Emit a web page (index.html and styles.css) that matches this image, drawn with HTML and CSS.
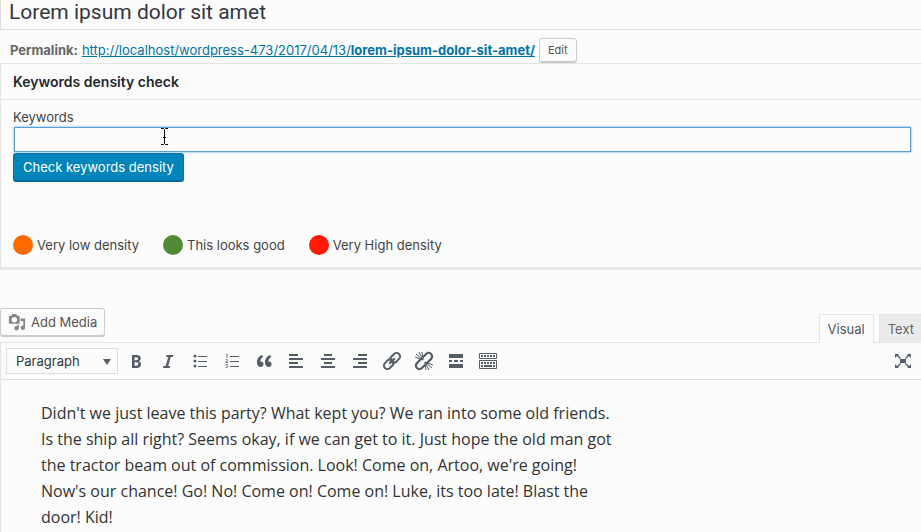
FILE: index.html
```html
<!DOCTYPE html>
<html lang="en">
<head>
    <meta charset="UTF-8">
    <meta name="viewport" content="width=device-width, initial-scale=1.0">
    <title>Edit Post</title>
    <link rel="stylesheet" href="styles.css">
</head>
<body>

    <input type="text" class="post-title" aria-label="Post title" value="Lorem ipsum dolor sit amet">

    <div class="permalink">
        <strong>Permalink:</strong>
        <a href="#">http://localhost/wordpress-473/2017/04/13/<b>lorem-ipsum-dolor-sit-amet/</b></a>
        <button type="button" class="button button-small">Edit</button>
    </div>

    <section class="postbox">
        <h2>Keywords density check</h2>
        <div class="inside">
            <label for="keywords">Keywords</label>
            <div class="field">
                <input type="text" id="keywords" class="keywords-input">
                <svg class="text-cursor" width="9" height="17" viewBox="0 0 9 17" fill="none" stroke="#000">
                    <path d="M1 .5h2.500l1 1 1-1H8M1 16.500h2.500l1-1 1 1H8M4.500 1.500v14M3 9.500h3"/>
                </svg>
            </div>
            <button type="button" class="button-primary">Check keywords density</button>
            <ul class="legend">
                <li><span class="dot low"></span>Very low density</li>
                <li><span class="dot good"></span>This looks good</li>
                <li><span class="dot high"></span>Very High density</li>
            </ul>
        </div>
    </section>

    <div class="editor-tools">
        <button type="button" class="button add-media">
            <svg width="18" height="18" viewBox="0 0 20 20" fill="#82878c">
                <path fill-rule="evenodd" d="M13 11V4c0-.55-.45-1-1-1h-1.670L9 1H5L3.670 3H2c-.55 0-1 .45-1 1v7c0 .55.45 1 1 1h10c.55 0 1-.45 1-1zM7 4.500a3 3 0 1 1 0 6 3 3 0 0 1 0-6z"/>
                <path d="M14 6h5v10.500a2.500 2.500 0 1 1-2.500-2.500c.170 0 .340.020.500.050V9h-3zM10 13h2v4a2.500 2.500 0 1 1-2.500-2.500c.170 0 .340.020.500.050z"/>
            </svg>
            Add Media
        </button>
        <div class="tabs">
            <button type="button" class="tab active">Visual</button>
            <button type="button" class="tab">Text</button>
        </div>
    </div>

    <div class="editor">
        <div class="toolbar">
            <div class="format">
                <select aria-label="Format">
                    <option>Paragraph</option>
                </select>
            </div>
            <button type="button" class="tool" aria-label="Bold">
                <svg viewBox="0 0 20 20"><path fill-rule="evenodd" d="M6 4v13h4.540c1.370 0 2.460-.33 3.260-1 .8-.66 1.200-1.580 1.200-2.770 0-.84-.17-1.510-.51-2.010s-.9-.85-1.670-1.030v-.09c.57-.1 1.020-.4 1.360-.9s.51-1.130.51-1.910c0-1.140-.39-1.980-1.170-2.500C12.750 4.260 11.500 4 9.780 4H6zm2.570 5.150V6.260h1.360c.73 0 1.270.11 1.610.32.340.220.510.580.510 1.070 0 .54-.16.92-.47 1.150s-.82.35-1.510.35h-1.500zm0 2.190h1.600c1.440 0 2.160.53 2.160 1.610 0 .6-.17 1.050-.51 1.340s-.86.43-1.570.43H8.570v-3.380z"/></svg>
            </button>
            <button type="button" class="tool" aria-label="Italic">
                <svg viewBox="0 0 20 20"><path d="M15.500 4l-.6 2h-2.150l-2.600 9h2.150l-.6 2H4.900l.6-2h2.150l2.600-9H8.100l.6-2z"/></svg>
            </button>
            <button type="button" class="tool" aria-label="Bulleted list">
                <svg viewBox="0 0 20 20"><circle cx="5" cy="5" r="1.500"/><circle cx="5" cy="10" r="1.500"/><circle cx="5" cy="15" r="1.500"/><path d="M8 5h9v1H8zM8 10h9v1H8zM8 15h9v1H8z"/></svg>
            </button>
            <button type="button" class="tool" aria-label="Numbered list">
                <svg viewBox="0 0 20 20"><path d="M8 5h9v1H8zM8 10h9v1H8zM8 15h9v1H8z"/><path fill="none" stroke="#555d66" stroke-width=".8" d="M4 3.800l1-.6V7M3.700 8.800q1.300-.8 1.800 0T3.700 11.500h2.300M3.700 13.500h2l-1.200 1.300q1.500 0 1.300 1.200t-2.200.6"/></svg>
            </button>
            <button type="button" class="tool" aria-label="Blockquote">
                <svg viewBox="0 0 20 20"><path d="M9.490 13.220c0-.74-.2-1.380-.61-1.900-.62-.78-1.830-.88-2.530-.72-.29-1.650 1.110-3.750 2.920-4.650L7.880 4c-2.730 1.300-5.420 4.280-4.960 8.050C3.210 14.430 4.590 16 6.540 16c.85 0 1.560-.25 2.120-.75s.83-1.180.83-2.030zm8.050 0c0-.74-.2-1.380-.61-1.900-.63-.78-1.830-.88-2.530-.72-.29-1.650 1.110-3.750 2.920-4.650L15.930 4c-2.730 1.300-5.410 4.280-4.950 8.050.29 2.380 1.660 3.950 3.610 3.950.85 0 1.560-.25 2.120-.75s.83-1.180.83-2.030z"/></svg>
            </button>
            <button type="button" class="tool" aria-label="Align left">
                <svg viewBox="0 0 20 20"><path d="M3 3h9v2H3zM3 7h14v2H3zM3 11h9v2H3zM3 15h14v2H3z"/></svg>
            </button>
            <button type="button" class="tool" aria-label="Align center">
                <svg viewBox="0 0 20 20"><path d="M6 3h8v2H6zM3 7h14v2H3zM6 11h8v2H6zM3 15h14v2H3z"/></svg>
            </button>
            <button type="button" class="tool" aria-label="Align right">
                <svg viewBox="0 0 20 20"><path d="M8 3h9v2H8zM3 7h14v2H3zM8 11h9v2H8zM3 15h14v2H3z"/></svg>
            </button>
            <button type="button" class="tool" aria-label="Insert link">
                <svg viewBox="0 0 20 20"><g fill="none" stroke="#555d66" stroke-width="2" transform="rotate(-45 10 10)"><rect x="0" y="6.500" width="11" height="7" rx="3.500"/><rect x="9" y="6.500" width="11" height="7" rx="3.500"/><path d="M6 10h8"/></g></svg>
            </button>
            <button type="button" class="tool" aria-label="Remove link">
                <svg viewBox="0 0 20 20"><g fill="none" stroke="#555d66" stroke-width="2.200" transform="rotate(-45 10 10)"><path d="M8.500 13.500h-5a3.500 3.500 0 0 1 0-7h5q1.500 0 2 1.500M11.500 6.500h5a3.500 3.500 0 0 1 0 7h-5q-1.500 0-2-1.500"/></g><path fill="none" stroke="#555d66" d="M9 9L1 6M9 9L2 3M9 9L5 1M9 9L8 1M11 11l8 3M11 11l7 6M11 11l4 8M11 11l1 8"/></svg>
            </button>
            <button type="button" class="tool" aria-label="Read more">
                <svg viewBox="0 0 20 20"><path d="M3 3h14v4H3zM3 9h3v2H3zM8 9h4v2H8zM14 9h3v2h-3zM3 13h14v4H3z"/></svg>
            </button>
            <button type="button" class="tool" aria-label="Toolbar toggle">
                <svg viewBox="0 0 20 20"><path fill="none" stroke="#555d66" d="M1.500 2.500h17v5h-17zM1.500 9.500h17v8h-17z"/><path d="M3 4h2v2H3zM6 4h2v2H6zM9 4h2v2H9zM12 4h2v2h-2zM15 4h2v2h-2zM3 11h2v2H3zM6 11h2v2H6zM9 11h2v2H9zM12 11h2v2h-2zM15 11h2v2h-2zM3 14h2v2H3zM6 14h8v2H6zM15 14h2v2h-2z"/></svg>
            </button>
            <button type="button" class="tool fullscreen" aria-label="Fullscreen">
                <svg viewBox="0 0 20 20"><path d="M7 8h6v4H7zM2 3h4L5 4l3 3-1 1-3-3-2 2zM18 3v4l-2-2-3 3-1-1 3-3-1-1zM2 17v-4l2 2 3-3 1 1-3 3 1 1zM18 17h-4l1-1-3-3 1-1 3 3 2-2z"/></svg>
            </button>
        </div>
        <div class="content" contenteditable="true">
            <p>Didn't we just leave this party? What kept you? We ran into some old friends. Is the ship all right? Seems okay, if we can get to it. Just hope the old man got the tractor beam out of commission. Look! Come on, Artoo, we're going! Now's our chance! Go! No! Come on! Come on! Luke, its too late! Blast the door! Kid!</p>
        </div>
    </div>

</body>
</html>
```
FILE: styles.css
```css
* {
    box-sizing: border-box;
}

body {
    margin: 0;
    background-color: #fcfcfc;
    color: #444;
    font-family: Inter, "Liberation Sans", sans-serif;
    font-size: 13px;
    line-height: 20px;
    overflow: hidden;
}

button, input, select {
    font-family: inherit;
    font-size: inherit;
}

button {
    cursor: pointer;
}

.post-title {
    display: block;
    width: 100%;
    height: 30px;
    padding: 0 8px 6px;
    border: 1px solid #ddd;
    border-width: 0 0 1px 1px;
    background-color: transparent;
    color: #32373c;
    font-family: Roboto, sans-serif;
    font-size: 21px;
    outline: none;
}

.permalink {
    display: flex;
    align-items: center;
    gap: 4px;
    height: 33px;
    padding: 7px 10px 0;
    color: #666;
}

.permalink strong {
    font-weight: 700;
}

.permalink a {
    color: #0073aa;
}

.permalink b {
    font-weight: 700;
}

.button {
    border: 1px solid #ccc;
    border-radius: 3px;
    background-color: #fcfcfc;
    box-shadow: 0 1px 0 #ccc;
    color: #555;
}

.button-small {
    height: 24px;
    padding: 0 8px;
    font-size: 11px;
}

.postbox {
    border: 1px solid #e5e5e5;
    border-width: 1px 0 3px 1px;
    border-bottom-color: #e8e8e8;
}

.postbox h2 {
    margin: 0;
    padding: 8px 12px 7px;
    border-bottom: 1px solid #e8e8e8;
    color: #23282d;
    font-size: 14px;
    font-weight: 600;
}

.inside {
    padding: 7px 10px 12px 12px;
}

.inside label {
    display: block;
}

.field {
    position: relative;
    padding: 0 0 1px 1px;
}

.keywords-input {
    display: block;
    width: 100%;
    height: 25px;
    padding: 3px 5px;
    border: 1px solid #5b9dd9;
    background-color: #fcfcfc;
    box-shadow: 0 0 2px rgba(30, 140, 190, .8);
    outline: none;
}

.text-cursor {
    position: absolute;
    top: 1px;
    left: 147px;
}

.button-primary {
    display: block;
    height: 29px;
    padding: 0 9px;
    border: 1px solid #0073aa;
    border-bottom: 2px solid #006799;
    border-radius: 3px;
    background-color: #0085ba;
    color: #fff;
}

.legend {
    display: flex;
    gap: 24px;
    margin: 53px 0 0;
    padding: 0;
    list-style: none;
}

.legend li {
    display: flex;
    align-items: center;
    gap: 4px;
}

.dot {
    width: 20px;
    height: 20px;
    border-radius: 50%;
}

.low {
    background-color: #ff6a00;
}

.good {
    background-color: #538a35;
}

.high {
    background-color: #ff1a00;
}

.editor-tools {
    display: flex;
    justify-content: space-between;
    align-items: flex-start;
    margin-top: 38px;
}

.add-media {
    display: flex;
    align-items: center;
    gap: 5px;
    height: 28px;
    padding: 0 7px;
}

.tabs {
    display: flex;
    gap: 5px;
    margin-top: 6px;
}

.tab {
    height: 29px;
    padding: 0 7px 0 8px;
    border: 1px solid #e5e5e5;
    border-width: 1px 0 0 1px;
    background-color: #ebebeb;
    color: #666;
}

.tab.active {
    position: relative;
    padding: 0 8px;
    border-right-width: 1px;
    background-color: #fcfcfc;
    color: #555;
}

.editor {
    min-height: 200px;
    margin-top: -1px;
    border-top: 1px solid #e5e5e5;
    border-left: 1px solid #e5e5e5;
}

.toolbar {
    display: flex;
    align-items: center;
    gap: 12px;
    height: 37px;
    padding: 0 8px 0 5px;
    border-bottom: 1px solid #ddd;
}

.format {
    position: relative;
    width: 112px;
    margin-right: -4px;
}

.format select {
    display: block;
    width: 100%;
    height: 26px;
    padding: 0 9px;
    border: 1px solid #ddd;
    border-radius: 0;
    appearance: none;
    background-color: transparent;
    color: #32373c;
}

/* drop-down arrow */
.format::after {
    content: "";
    position: absolute;
    top: 11px;
    right: 7px;
    border: 4px solid transparent;
    border-top: 6px solid #555d66;
    border-bottom: 0;
    pointer-events: none;
}

.tool {
    width: 20px;
    height: 20px;
    padding: 0;
    border: 0;
    background: none;
}

.tool svg {
    display: block;
    fill: #555d66;
}

.fullscreen {
    margin-left: auto;
}

.content {
    max-width: 620px;
    padding: 20px 0 0 40px;
    color: #333;
    font-family: "Open Sans", sans-serif;
    font-size: 16px;
    line-height: 26px;
    outline: none;
}

.content p {
    margin: 0;
}
```
